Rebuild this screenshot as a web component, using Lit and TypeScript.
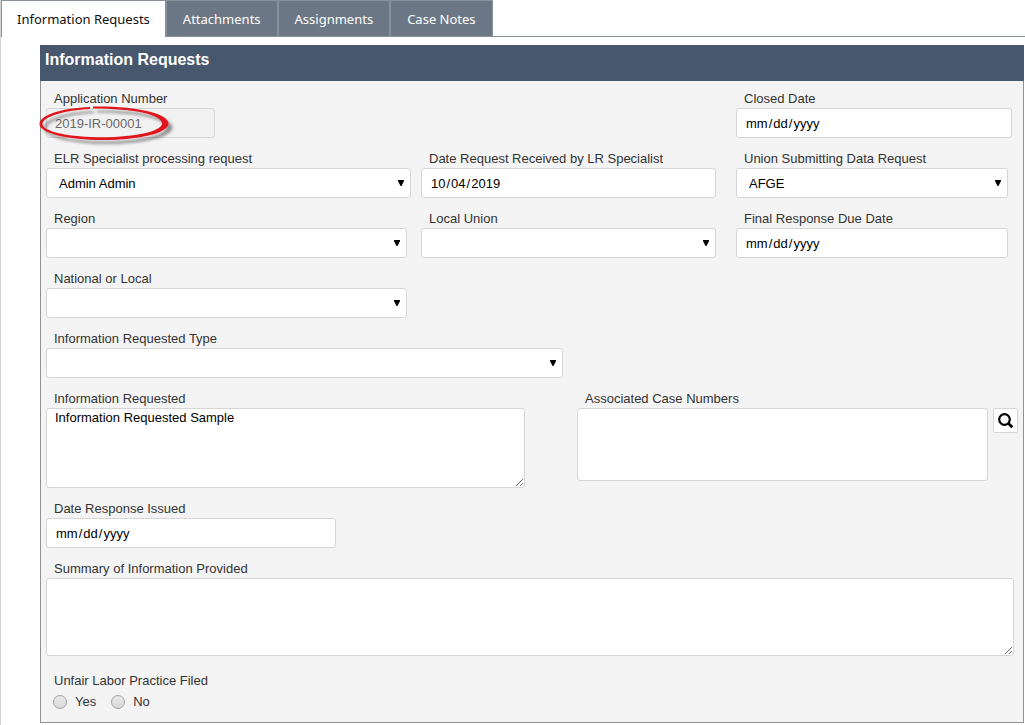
import { LitElement, html, css, svg } from "lit";
import { customElement, state } from "lit/decorators.js";
import { classMap } from "lit/directives/class-map.js";

const TABS = ["Information Requests", "Attachments", "Assignments", "Case Notes"];

@customElement("app-root")
export class AppRoot extends LitElement {
  static styles = css`
    :host {
      display: block;
      box-sizing: border-box;
      min-height: 100vh;
      border-left: 1px solid #d4d4d4;
      background: #fff;
      color: #333;
      font-family: "Liberation Sans", Arial, sans-serif;
      font-size: 13px;
      line-height: 20px;
    }
    *, *::before, *::after { box-sizing: border-box; }

    .tabs {
      display: flex;
      height: 37px;
      border-bottom: 1px solid #8b939b;
    }
    .tab {
      height: 36px;
      margin: 0;
      padding: 0 16px;
      border: 0 solid #87919b;
      border-width: 1px 1px 0 1px;
      background: #6b7784;
      color: #fff;
      font-family: "Noto Sans", "Segoe UI", sans-serif;
      font-size: 13px;
      line-height: 20px;
    }
    .tab.active {
      height: 37px;
      padding: 0 15px;
      background: #fff;
      color: #111;
    }

    .panel {
      margin: 8px 1px 2px 39px;
      border: 1px solid #8f9295;
      border-top: 0;
      background: #f4f4f4;
    }
    .panel-title {
      margin: 0 -1px;
      padding: 5px 5px 11px;
      background: #46576e;
      color: #fff;
      font-size: 16px;
      line-height: 20px;
      font-weight: bold;
    }
    .form {
      display: grid;
      gap: 10px;
      margin: 0;
      padding: 7px 5px 8px;
    }
    .row { display: grid; align-items: start; }
    .thirds { grid-template-columns: 375fr 315fr 282fr; }
    .pair { grid-template-columns: 479fr 441fr; column-gap: 52px; }
    .half { grid-template-columns: 517fr 455fr; }
    .third { grid-template-columns: 290fr 682fr; }
    .field { display: grid; min-width: 0; }
    .col-last { grid-column: 3; }
    .gap-xs { padding-right: 4px; }
    .gap-s { padding-right: 6px; }
    .gap-m { padding-right: 10px; }
    .gap-l { padding-right: 14px; }
    .gap-xl { padding-right: 20px; }
    label, legend { padding: 2px 8px 0; line-height: 18px; }

    .control {
      width: 100%;
      height: 30px;
      margin: 0;
      padding: 2px 8px 0;
      border: 1px solid #d6d6d6;
      border-radius: 3px;
      background-color: #fff;
      color: #000;
      font: 13px/20px "Liberation Sans", Arial, sans-serif;
    }
    .control:disabled {
      padding-top: 0;
      background-color: #f1f1f1;
      color: #6a6a6a;
      -webkit-text-fill-color: #6a6a6a;
      opacity: 1;
    }
    .short { width: 45%; }
    .date::-webkit-calendar-picker-indicator { display: none; }
    .select {
      appearance: none;
      padding: 2px 20px 0 12px;
      background-image: url("data:image/svg+xml,%3Csvg xmlns='http://www.w3.org/2000/svg' width='6' height='6'%3E%3Cpath d='M0 0H6V1L3.500 6H2.500L0 1Z' fill='%23000'/%3E%3C/svg%3E");
      background-repeat: no-repeat;
      background-position: right 6px top 11px;
    }
    .area {
      display: block;
      height: 80px;
      padding: 0 8px;
      line-height: 18px;
      resize: both;
    }
    .cases { height: 73px; resize: none; }
    .summary { height: 78px; }
    .lookup { display: flex; gap: 5px; align-items: flex-start; }
    .search {
      display: grid;
      place-items: center;
      flex: none;
      width: 25px;
      height: 25px;
      padding: 0;
      border: 1px solid #d6d6d6;
      border-radius: 2px;
      background: #fff;
      color: #000;
    }

    .marked { position: relative; }
    .marker {
      position: absolute;
      left: -9px;
      top: -5px;
      pointer-events: none;
      overflow: visible;
    }

    .choices { margin: 4px 0 0; padding: 0; border: 0; }
    .options { display: flex; gap: 15px; padding-left: 7px; }
    .option { display: flex; align-items: center; gap: 8px; padding: 0; line-height: 24px; }
    .radio {
      appearance: none;
      width: 14px;
      height: 14px;
      margin: 0;
      border: 1px solid #a3a3a3;
      border-radius: 50%;
      background: linear-gradient(#e9e9e9, #d9d9d9);
    }
    .radio:checked { box-shadow: inset 0 0 0 3px #e2e2e2; background: #444; }
  `;

  @state() private active = 0;

  private select(id: string, label: string, gap: string, value = "") {
    return html`
      <div class="field ${gap}">
        <label for=${id}>${label}</label>
        <select class="control select" id=${id}><option>${value}</option></select>
      </div>`;
  }

  private date(id: string, label: string, gap: string, value = "") {
    return html`
      <div class="field ${gap}">
        <label for=${id}>${label}</label>
        <input class="control date" type="date" id=${id} .value=${value} />
      </div>`;
  }

  private marker() {
    return svg`
      <svg class="marker" width="142" height="44" viewBox="0 0 142 44" aria-hidden="true">
        <defs>
          <filter id="soft" x="-10%" y="-20%" width="125%" height="150%">
            <feDropShadow dx="4" dy="4" stdDeviation="1.5" flood-color="#000" flood-opacity="0.4"/>
          </filter>
        </defs>
        <path filter="url(#soft)" fill="#e0191c" fill-rule="evenodd"
          d="M53 4C25 5 2.500 12 2.500 21C2.500 30 30 37 66 37C103 37 131.500 30 131.500 20.500C131.500 11 102 3 56 3.500L56 5.500C98 5.500 125 12 125 20.500C125 28 99 34.200 66 34.200C33 34.200 5.500 29 5.500 21C5.500 14 28 7 53 6Z"/>
      </svg>`;
  }

  render() {
    return html`
      <div class="tabs" role="tablist">
        ${TABS.map((name, i) => html`
          <button
            class=${classMap({ tab: true, active: i === this.active })}
            type="button"
            role="tab"
            aria-selected=${i === this.active}
            @click=${() => (this.active = i)}
          >${name}</button>`)}
      </div>
      <main class="panel">
        <h1 class="panel-title">Information Requests</h1>
        <form class="form">
          <div class="row thirds">
            <div class="field">
              <label for="number">Application Number</label>
              <div class="marked">
                <input class="control short" id="number" type="text" value="2019-IR-00001" disabled />
                ${this.marker()}
              </div>
            </div>
            ${this.date("closed", "Closed Date", "gap-s col-last")}
          </div>
          <div class="row thirds">
            ${this.select("specialist", "ELR Specialist processing request", "gap-m", "Admin Admin")}
            ${this.date("received", "Date Request Received by LR Specialist", "gap-xl", "2019-10-04")}
            ${this.select("union", "Union Submitting Data Request", "gap-m", "AFGE")}
          </div>
          <div class="row thirds">
            ${this.select("region", "Region", "gap-l")}
            ${this.select("local", "Local Union", "gap-xl")}
            ${this.date("due", "Final Response Due Date", "gap-m")}
          </div>
          <div class="row thirds">
            ${this.select("scope", "National or Local", "gap-l")}
          </div>
          <div class="row half">
            ${this.select("type", "Information Requested Type", "")}
          </div>
          <div class="row pair">
            <div class="field">
              <label for="requested">Information Requested</label>
              <textarea class="control area" id="requested">Information Requested Sample</textarea>
            </div>
            <div class="field">
              <label for="cases">Associated Case Numbers</label>
              <div class="lookup">
                <textarea class="control area cases" id="cases"></textarea>
                <button class="search" type="button" aria-label="Find case numbers">
                  <svg width="17" height="17" viewBox="0 0 17 17" fill="none" stroke="currentColor" aria-hidden="true">
                    <circle cx="7.500" cy="7.500" r="5.300" stroke-width="2.200"/>
                    <path d="M11.200 11.200L15.300 15.300" stroke-width="2.800"/>
                  </svg>
                </button>
              </div>
            </div>
          </div>
          <div class="row third">
            ${this.date("issued", "Date Response Issued", "")}
          </div>
          <div class="field gap-xs">
            <label for="summary">Summary of Information Provided</label>
            <textarea class="control area summary" id="summary"></textarea>
          </div>
          <fieldset class="choices">
            <legend>Unfair Labor Practice Filed</legend>
            <div class="options">
              <label class="option"><input class="radio" type="radio" name="ulp" />Yes</label>
              <label class="option"><input class="radio" type="radio" name="ulp" />No</label>
            </div>
          </fieldset>
        </form>
      </main>
    `;
  }
}
